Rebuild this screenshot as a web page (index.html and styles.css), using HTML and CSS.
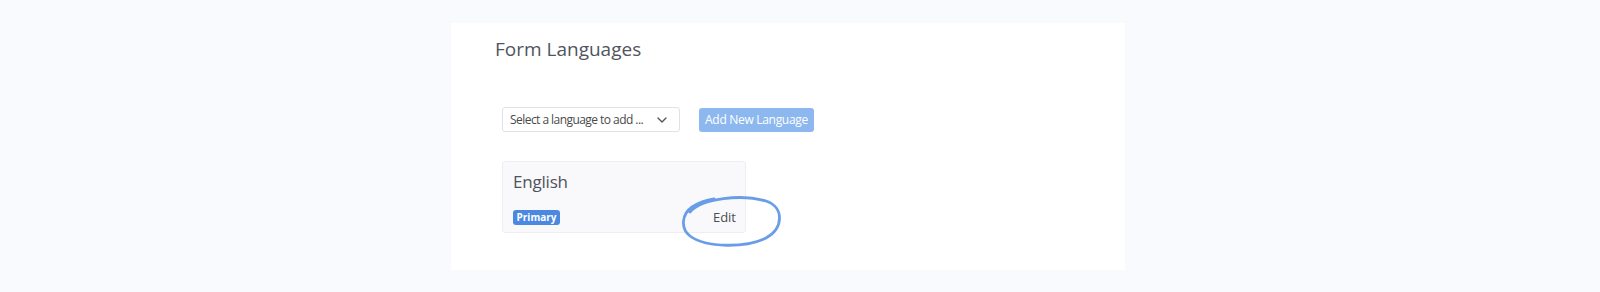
FILE: index.html
```html
<!DOCTYPE html>
<html>
<head>
    <title>Form Languages</title>
    <link rel="stylesheet" href="styles.css">
</head>
<body>
    <div class="panel">
        <h2 class="title">Form Languages</h2>

        <div class="add-row">
            <div class="select">
                <span>Select a language to add ...</span>
                <svg class="chevron" width="10" height="6" viewBox="0 0 10 6">
                    <path d="M1 1 L5 5 L9 1" fill="none" stroke="#555" stroke-width="1.4" stroke-linecap="round" stroke-linejoin="round"/>
                </svg>
            </div>
            <button class="add-btn">Add New Language</button>
        </div>

        <div class="card">
            <div class="lang-name">English</div>
            <div class="card-row">
                <span class="badge">Primary</span>
                <span class="edit">Edit</span>
            </div>
            <!-- hand drawn circle round the Edit link -->
            <svg class="scribble" width="104" height="56" viewBox="0 0 104 56">
                <path d="M10 20 C 22 6 62 2 86 9 C 104 15 104 36 86 46 C 66 56 26 56 10 44 C 0 36 2 22 12 15 C 20 10 28 8 34 7"
                      fill="none" stroke="#6a9de8" stroke-width="2.8" stroke-linecap="round"/>
            </svg>
        </div>
    </div>
</body>
</html>
```

FILE: styles.css
```css
body {
    margin: 0;
    background-color: #f9fafd;
    font-family: 'Open Sans', sans-serif;
}
.panel {
    width: 630px;
    height: 233px;
    margin: 23px 0 0 451px;
    padding: 14px 0 0 44px;
    background-color: #ffffff;
}
.title {
    margin: 0;
    font-size: 19px;
    font-weight: 400;
    line-height: 24px;
    color: #50545f;
}
.add-row {
    display: flex;
    align-items: center;
    margin: 46px 0 0 7px;
}
.select {
    box-sizing: border-box;
    width: 178px;
    height: 25px;
    display: flex;
    align-items: center;
    justify-content: space-between;
    padding: 0 12px 0 7px;
    border: 1px solid #dfe2e8;
    border-radius: 3px;
    font-size: 12px;
    letter-spacing: -0.55px;
    white-space: nowrap;
    color: #4a4a4a;
}
.add-btn {
    box-sizing: border-box;
    width: 115px;
    height: 24px;
    margin-left: 19px;
    padding: 0;
    border: none;
    border-radius: 3px;
    background-color: #8db8ef;
    color: #ffffff;
    font-family: 'Open Sans', sans-serif;
    font-size: 12px;
    letter-spacing: -0.3px;
    white-space: nowrap;
}
.card {
    position: relative;
    box-sizing: border-box;
    width: 244px;
    height: 72px;
    margin: 29px 0 0 7px;
    padding: 9px 9px 0 10px;
    background-color: #f9f9fb;
    border: 1px solid #eceef2;
    border-radius: 3px;
}
.lang-name {
    font-size: 17px;
    line-height: 22px;
    letter-spacing: -0.2px;
    color: #4f535c;
}
.card-row {
    display: flex;
    align-items: center;
    justify-content: space-between;
    height: 15px;
    margin-top: 17px;
}
.badge {
    box-sizing: border-box;
    width: 47px;
    height: 15px;
    line-height: 15px;
    text-align: center;
    background-color: #4a89df;
    color: #ffffff;
    border-radius: 3px;
    font-size: 10px;
    font-weight: 700;
}
.edit {
    font-size: 13px;
    line-height: 15px;
    color: #4a4d55;
}
.scribble {
    position: absolute;
    left: 177px;
    top: 30px;
}
```
